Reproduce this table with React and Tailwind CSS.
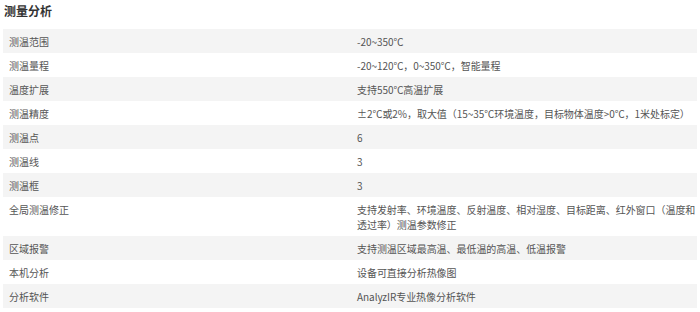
import React from 'react';

const rows = [
    ['测温范围', '-20~350℃'],
    ['测温量程', '-20~120℃，0~350℃，智能量程'],
    ['温度扩展', '支持550℃高温扩展'],
    ['测温精度', '±2℃或2%，取大值（15~35℃环境温度，目标物体温度>0℃，1米处标定）'],
    ['测温点', '6'],
    ['测温线', '3'],
    ['测温框', '3'],
    ['全局测温修正', '支持发射率、环境温度、反射温度、相对湿度、目标距离、红外窗口（温度和透过率）测温参数修正'],
    ['区域报警', '支持测温区域最高温、最低温的高温、低温报警'],
    ['本机分析', '设备可直接分析热像图'],
    ['分析软件', 'AnalyzIR专业热像分析软件'],
];

const App = () => {
    return (
        <div
            className="w-[700px] h-[312px] bg-white overflow-hidden"
            style={{ fontFamily: '"Noto Sans CJK SC", "Noto Sans", sans-serif' }}
        >
            <h2 className="pl-[4px] pt-[2px] h-[29px] text-[12px] leading-[18px] font-bold text-[#333]">
                测量分析
            </h2>
            <div className="ml-[3px] w-[694px] text-[10px] leading-[15px] text-[#555]">
                {rows.map(([label, value], i) => (
                    <div
                        key={label}
                        className={`grid grid-cols-[348px_1fr] ${i % 2 === 0 ? 'bg-[#f4f4f4]' : 'bg-white'}`}
                    >
                        <div className="pl-[6px] py-[4.5px]">{label}</div>
                        <div className="pl-[6px] py-[4.5px] tracking-[-0.05px]">{value}</div>
                    </div>
                ))}
            </div>
        </div>
    );
};

export default App;
